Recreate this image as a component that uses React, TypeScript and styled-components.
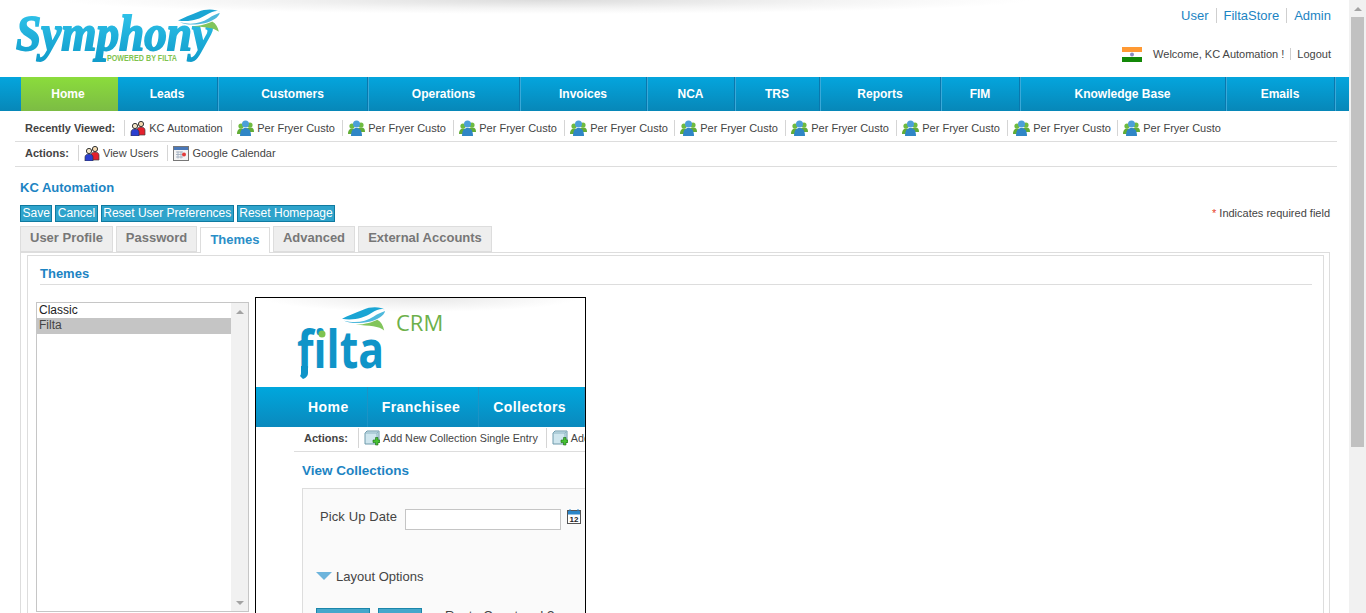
import React from "react";
import styled, { createGlobalStyle } from "styled-components";

const Global = createGlobalStyle`
  html, body { margin: 0; padding: 0; height: 613px; overflow: hidden; background: #fff; }
  body { font-family: "Liberation Sans", Arial, sans-serif; }
  * { box-sizing: border-box; }
`;

const Page = styled.div`
  display: flex;
  width: 1366px;
  height: 613px;
  overflow: hidden;
`;
const Main = styled.main`
  width: 1349px;
  flex: none;
  height: 613px;
  overflow: hidden;
`;
const ScrollRail = styled.aside`
  width: 17px;
  flex: none;
  background: #f1f1f1;
  display: flex;
  flex-direction: column;
  align-items: center;
`;
const ScrollUp = styled.div`
  height: 17px;
  width: 100%;
  display: flex;
  align-items: center;
  justify-content: center;
  &::before {
    content: "";
    border-left: 4px solid transparent;
    border-right: 4px solid transparent;
    border-bottom: 4px solid #a3a3a3;
  }
`;
const ScrollThumb = styled.div`
  width: 13px;
  height: 430px;
  background: #c1c1c1;
`;

const Header = styled.header`
  position: relative;
  height: 77px;
  display: flex;
  justify-content: space-between;
  padding: 10px 18px 0 15px;
  &::before {
    content: "";
    position: absolute;
    top: 0;
    left: 60px;
    width: 970px;
    height: 14px;
    background: radial-gradient(ellipse 50% 100% at 50% 0, #dcdcdc 0%, #f4f4f4 60%, #ffffff 100%);
  }
`;
const LogoBox = styled.div`
  position: relative;
  width: 206px;
  height: 56px;
`;
const HeaderRight = styled.div`
  position: relative;
  display: flex;
  flex-direction: column;
  align-items: flex-end;
`;
const TopLinks = styled.div`
  display: flex;
  height: 15px;
  align-items: center;
  font-size: 13px;
  margin: -2px 0 23px;
`;
const TopLink = styled.a`
  color: #1c84c3;
  padding: 0 7px;
  line-height: 15px;
  border-left: 1px solid #cfcfcf;
  &:first-child { border-left: 0; }
  &:last-child { padding-right: 0; }
`;
const WelcomeRow = styled.div`
  display: flex;
  align-items: center;
  font-size: 11px;
  color: #444;
  height: 16px;
`;
const FlagBox = styled.svg`
  margin-right: 11px;
  display: block;
`;
const Divider = styled.span`
  width: 1px;
  height: 12px;
  background: #cfcfcf;
  margin: 0 6px;
`;

const Nav = styled.nav`
  height: 34px;
  padding-left: 21px;
  display: flex;
  background: linear-gradient(#04a5dd, #0787b8);
`;
const NavItem = styled.a<{ $w: number; $active?: boolean }>`
  width: ${(p) => p.$w}px;
  flex: none;
  display: flex;
  align-items: center;
  justify-content: center;
  padding-right: ${(p) => (p.$active ? 3 : 2)}px;
  color: #fff;
  font-size: 12px;
  font-weight: 700;
  background: ${(p) => (p.$active ? "linear-gradient(#8bdc3c, #7cbc44)" : "transparent")};
  border-right: ${(p) => (p.$active ? "0" : "1px solid #3aa9d8")};
  box-shadow: ${(p) => (p.$active ? "none" : "inset -1px 0 0 #0a78ad")};
`;

const Crumbs = styled.div`
  padding: 0 12px 0 15px;
`;
const CrumbRow = styled.div<{ $h: number; $shift: number }>`
  height: ${(p) => p.$h}px;
  padding: ${(p) => (p.$shift > 0 ? p.$shift : 0)}px 0 ${(p) => (p.$shift < 0 ? -p.$shift : 0)}px 10px;
  display: flex;
  align-items: center;
  border-bottom: 1px solid #ddd;
  font-size: 11px;
  color: #444;
`;
const CrumbLabel = styled.b`
  font-weight: 700;
  font-size: 11px;
  margin-right: 9px;
`;
const CrumbItem = styled.span<{ $w?: number }>`
  display: flex;
  align-items: center;
  height: 16px;
  padding-left: 5px;
  border-left: 1px solid #d5d5d5;
  ${(p) => (p.$w ? `width: ${p.$w}px;` : "margin-right: 9px;")}
  flex: none;
  gap: 3px;
  white-space: nowrap;
`;

const Content = styled.div`
  padding: 0 19px 0 20px;
`;
const PageTitle = styled.h1`
  margin: 13px 0 10px;
  font-size: 13px;
  line-height: 15px;
  font-weight: 700;
  color: #1c84c3;
`;
const ActionBar = styled.div`
  display: flex;
  justify-content: space-between;
  align-items: center;
  height: 17px;
`;
const ActionGroup = styled.div`
  display: flex;
  gap: 3px;
`;
const ActionBtn = styled.button`
  font-family: inherit;
  font-size: 12px;
  height: 17px;
  line-height: 15px;
  padding: 0 1.5px;
  border: 1px solid #0f7aa0;
  background: #2ea3cb;
  color: #fff;
  white-space: nowrap;
`;
const Required = styled.div`
  font-size: 11px;
  color: #444;
  margin-bottom: 1px;
  span { color: #e8402a; }
`;
const Tabs = styled.div`
  display: flex;
  gap: 3px;
  margin-top: 4px;
  height: 26px;
`;
const Tab = styled.a<{ $w: number; $active?: boolean }>`
  position: relative;
  z-index: 1;
  width: ${(p) => p.$w}px;
  height: 26px;
  margin-top: ${(p) => (p.$active ? 1 : 0)}px;
  padding-bottom: ${(p) => (p.$active ? 2 : 4)}px;
  display: flex;
  align-items: center;
  justify-content: center;
  font-size: 13px;
  font-weight: 700;
  color: ${(p) => (p.$active ? "#2a8ec7" : "#777")};
  background: ${(p) => (p.$active ? "#fff" : "#eee")};
  border: 1px solid #ddd;
  border-bottom: ${(p) => (p.$active ? "0" : "1px solid #ddd")};
`;
const Outer = styled.div`
  border: 1px solid #ddd;
  padding: 2px 5px 0 6px;
  height: 400px;
`;
const Inner = styled.div`
  border: 1px solid #ddd;
  padding: 0 11px 0 8px;
  height: 400px;
`;
const SectionTitle = styled.h2`
  margin: 0 0 12px 4px;
  padding: 10px 0 2px;
  font-size: 13px;
  line-height: 16px;
  font-weight: 700;
  color: #1c84c3;
  border-bottom: 1px solid #ddd;
`;
const ThemeRow = styled.div`
  display: flex;
  align-items: flex-start;
  gap: 6px;
`;
const ThemeList = styled.div`
  width: 213px;
  height: 310px;
  margin-top: 5px;
  border: 1px solid #c6c6c6;
  display: flex;
`;
const ListOptions = styled.div`
  flex: 1;
  font-size: 12px;
  color: #222;
`;
const ListOption = styled.div<{ $sel?: boolean }>`
  height: ${(p) => (p.$sel ? 16 : 15)}px;
  line-height: 15px;
  padding-left: 2px;
  background: ${(p) => (p.$sel ? "#c5c5c5" : "transparent")};
  color: ${(p) => (p.$sel ? "#444" : "#222")};
`;
const ListScroll = styled.div`
  width: 17px;
  background: #f1f1f1;
  display: flex;
  flex-direction: column;
  justify-content: space-between;
  align-items: center;
  padding: 7px 0 6px;
`;
const Arrow = styled.i<{ $down?: boolean }>`
  border-left: 4px solid transparent;
  border-right: 4px solid transparent;
  ${(p) => (p.$down ? "border-top: 4px solid #a3a3a3;" : "border-bottom: 4px solid #a3a3a3;")}
`;

const Preview = styled.div`
  width: 331px;
  height: 340px;
  flex: none;
  border: 1px solid #000;
  background: #fff;
  overflow: hidden;
`;
const PvHeader = styled.div`
  position: relative;
  height: 89px;
  background: radial-gradient(ellipse 48% 14px at 50% 0, #e8e8e8 0%, #ffffff 100%);
  padding: 10px 0 0 41px;
  display: flex;
`;
const PvCrm = styled.div`
  font-family: "Open Sans", sans-serif;
  font-size: 22px;
  line-height: 30px;
  color: #6cb04a;
  margin: -1px 0 0;
`;
const PvNav = styled.div`
  height: 40px;
  display: flex;
  padding-left: 38px;
  background: linear-gradient(#00a7dd, #0a89bd);
`;
const PvNavItem = styled.span`
  display: flex;
  align-items: center;
  padding: 0 18px 0 14px;
  color: #fff;
  font-size: 14px;
  font-weight: 700;
  letter-spacing: 0.45px;
  border-right: 1px solid #1d93c5;
  white-space: nowrap;
`;
const PvBody = styled.div`
  padding-left: 38px;
  width: 440px;
`;
const PvActions = styled.div`
  height: 25px;
  display: flex;
  align-items: center;
  padding: 0 0 2px 10px;
  border-bottom: 1px solid #ddd;
  font-size: 10.75px;
  color: #444;
`;
const PvActionLabel = styled(CrumbLabel)`
  margin-right: 10px;
`;
const PvItem = styled.span`
  display: flex;
  align-items: center;
  height: 20px;
  gap: 3px;
  padding-left: 5px;
  margin-right: 8px;
  border-left: 1px solid #d5d5d5;
  white-space: nowrap;
`;
const PvTitle = styled.h3`
  margin: 10px 0 9px 8px;
  font-size: 13.5px;
  line-height: 17px;
  font-weight: 700;
  color: #1c84c3;
`;
const PvBox = styled.div`
  margin-left: 8px;
  background: #fafafa;
  border: 1px solid #ddd;
  border-right: 0;
  height: 200px;
  width: 400px;
  padding: 19px 0 0 17px;
  font-size: 13px;
  color: #444;
`;
const PvField = styled.div`
  display: flex;
  align-items: center;
  height: 22px;
`;
const PvLabel = styled.span`
  margin-bottom: 6px;
  letter-spacing: 0.1px;
`;
const PvInput = styled.div`
  width: 156px;
  height: 21px;
  margin: 0 6px 0 8px;
  background: #fff;
  border: 1px solid #c5c5c5;
`;
const PvIconWrap = styled.span`
  display: flex;
  margin-bottom: 6px;
`;
const PvToggle = styled.div`
  display: flex;
  align-items: center;
  gap: 4px;
  margin: 37px 0 0 -4px;
  height: 18px;
`;
const PvTriangle = styled.i`
  border-left: 8px solid transparent;
  border-right: 8px solid transparent;
  border-top: 8px solid #6db4dc;
`;
const PvButtons = styled.div`
  display: flex;
  align-items: flex-start;
  margin: 23px 0 0 -4px;
`;
const PvBtn = styled.div<{ $w: number }>`
  width: ${(p) => p.$w}px;
  height: 24px;
  margin-right: 8px;
  background: #45a7cb;
  border: 1px solid #1b86aa;
`;
const PvNote = styled.span`
  margin: 0 0 0 15px;
  line-height: 15px;
`;
const FiltaWord = styled.text`
  font-variant-ligatures: none;
`;

const UsersIcon = () => (
  <svg width="16" height="16" viewBox="0 0 16 16">
    <circle cx="11" cy="4" r="2.6" fill="#f3d9b0" stroke="#333" strokeWidth="1" />
    <path d="M7 15V10c0-2 2-3 4-3s4 1 4 3v5z" fill="#e4202c" stroke="#444" strokeWidth=".7" />
    <circle cx="5" cy="6" r="2.6" fill="#f3e6c8" stroke="#333" strokeWidth="1" />
    <path d="M1 16v-4c0-2 2-3 4-3s4 1 4 3v4z" fill="#2a3fd0" stroke="#334" strokeWidth=".7" />
  </svg>
);
const PeopleIcon = () => (
  <svg width="17" height="16" viewBox="0 0 17 16">
    <circle cx="4" cy="6" r="2.6" fill="#6fbb3f" />
    <path d="M0 14c0-4 2-5.500 4-5.500s4 1.500 4 5.500z" fill="#62ad36" />
    <circle cx="13" cy="5" r="2.600" fill="#6fbb3f" />
    <path d="M9 12c0-4 2-4.500 4-4.500s4 .5 4 4.500z" fill="#62ad36" />
    <circle cx="8.500" cy="4" r="3.500" fill="#4c9fd8" />
    <path d="M3 16c0-6 2.500-8 5.500-8s5.500 2 5.500 8z" fill="#2f86c6" />
  </svg>
);
const CalendarIcon = () => (
  <svg width="16" height="15" viewBox="0 0 16 15">
    <rect x=".5" y=".5" width="15" height="14" fill="#f4f4f4" stroke="#777" />
    <rect x="1" y="1" width="14" height="3" fill="#4a78b8" />
    <path d="M3 6h7M3 8.500h7M3 11h7M5 5.500v7M8 5.500v7" stroke="#a8b4c4" />
    <circle cx="11" cy="8.500" r="2" fill="#e33c3c" />
  </svg>
);
const AddIcon = () => (
  <svg width="16" height="16" viewBox="0 0 16 16">
    <path d="M1 3l2-2h12v11l-2 2H1z" fill="#cfe6ee" stroke="#6e9aab" />
    <path d="M1 3h12v11M13 3l2-2" fill="none" stroke="#8db4c2" />
    <path d="M9 10h2.500V7.500H14V10h2v2.500h-2V15h-2.500v-2.500H9z" fill="#46c233" stroke="#1c6a14" strokeWidth=".6" />
  </svg>
);
const DateIcon = () => (
  <svg width="14" height="15" viewBox="0 0 14 15">
    <rect x=".5" y="1.500" width="13" height="13" fill="#fff" stroke="#555" />
    <rect x="1" y="2" width="12" height="3.500" fill="#2c86c8" />
    <path d="M3 0v3M11 0v3" stroke="#2c86c8" />
    <text x="7" y="13" textAnchor="middle" fontSize="8" fontWeight="700" fontFamily="Liberation Sans" fill="#222">12</text>
  </svg>
);

const Leaf = ({ x, y, s }: { x: number; y: number; s: number }) => (
  <g transform={`translate(${x} ${y}) scale(${s})`}>
    <path d="M0 11C12 13 22 10 30 5 36 1 42 0 44 2 40-1 30-2 21 2 13 5 6 8 0 11Z" fill="#1aa5d4" />
    <path d="M2 13C14 16 24 14 32 9 36 6 41 4 44 3 43 8 36 12 28 14 18 16 8 16 2 13Z" fill="#4fb9dc" />
    <path d="M14 17C24 17 32 14 36 12 40 14 42 18 43 23 38 18 28 18 14 17Z" fill="#82c55b" />
  </g>
);

const SymphonyLogo = () => (
  <LogoBox>
    <svg width="206" height="56" viewBox="0 0 206 56" style={{ display: "block", overflow: "visible" }}>
      <defs>
        <linearGradient id="sg" x1="0" y1="0" x2="0" y2="1">
          <stop offset="0" stopColor="#34c8ee" />
          <stop offset="1" stopColor="#109ccb" />
        </linearGradient>
      </defs>
      <text x="1" y="40" fontFamily="Liberation Serif" fontStyle="italic" fontWeight="700" fontSize="51" fill="url(#sg)" textLength="196" lengthAdjust="spacingAndGlyphs" stroke="url(#sg)" strokeWidth="1.8">Symphony</text>
      <text x="92" y="51" fontFamily="Liberation Sans" fontWeight="700" fontSize="8.5" fill="#7fc34f" textLength="70" lengthAdjust="spacingAndGlyphs">POWERED BY FILTA</text>
      <Leaf x={163} y={0} s={0.95} />
    </svg>
  </LogoBox>
);

const FiltaLogo = () => (
  <svg width="99" height="72" viewBox="0 0 99 72" style={{ display: "block", overflow: "visible" }}>
    <Leaf x={45} y={0} s={0.98} />
    <FiltaWord x="0" y="60" fontFamily="Open Sans" fontWeight="700" fontSize="52" fill="#0f94c8" textLength="87" lengthAdjust="spacingAndGlyphs">filta</FiltaWord>
    <path d="M4 58h7v7q0 4-5 6l-3-3q1-1 1-3z" fill="#0f94c8" />
    <circle cx="25" cy="26" r="3.500" fill="#7fc34f" />
  </svg>
);

const navItems: [string, number][] = [
  ["Home", 97], ["Leads", 101], ["Customers", 150], ["Operations", 152], ["Invoices", 127],
  ["NCA", 88], ["TRS", 85], ["Reports", 121], ["FIM", 79], ["Knowledge Base", 206], ["Emails", 109],
];
const recentWidths = [111, 111, 111, 110, 111, 111, 111, 110, 110];

export default function App() {
  return (
    <Page>
      <Global />
      <Main>
        <Header>
          <SymphonyLogo />
          <HeaderRight>
            <TopLinks>
              <TopLink>User</TopLink>
              <TopLink>FiltaStore</TopLink>
              <TopLink>Admin</TopLink>
            </TopLinks>
            <WelcomeRow>
              <FlagBox width="20" height="15" viewBox="0 0 20 15">
                <rect width="20" height="5" fill="#ff9933" />
                <rect y="5" width="20" height="5" fill="#fff" />
                <rect y="10" width="20" height="5" fill="#138808" />
                <circle cx="10" cy="7.500" r="2" fill="#8a8ac0" />
              </FlagBox>
              <span>Welcome, KC Automation !</span>
              <Divider />
              <span>Logout</span>
            </WelcomeRow>
          </HeaderRight>
        </Header>
        <Nav>
          {navItems.map(([label, w], i) => (
            <NavItem key={label} $w={w} $active={i === 0}>{label}</NavItem>
          ))}
        </Nav>
        <Crumbs>
          <CrumbRow $h={31} $shift={4}>
            <CrumbLabel>Recently Viewed:</CrumbLabel>
            <CrumbItem $w={107}><UsersIcon /><span>KC Automation</span></CrumbItem>
            {recentWidths.map((w, i) => (
              <CrumbItem key={i} $w={w}><PeopleIcon /><span>Per Fryer Custo</span></CrumbItem>
            ))}
          </CrumbRow>
          <CrumbRow $h={25} $shift={-2}>
            <CrumbLabel>Actions:</CrumbLabel>
            <CrumbItem><UsersIcon /><span>View Users</span></CrumbItem>
            <CrumbItem><CalendarIcon /><span>Google Calendar</span></CrumbItem>
          </CrumbRow>
        </Crumbs>
        <Content>
          <PageTitle>KC Automation</PageTitle>
          <ActionBar>
            <ActionGroup>
              <ActionBtn>Save</ActionBtn>
              <ActionBtn>Cancel</ActionBtn>
              <ActionBtn>Reset User Preferences</ActionBtn>
              <ActionBtn>Reset Homepage</ActionBtn>
            </ActionGroup>
            <Required><span>*</span> Indicates required field</Required>
          </ActionBar>
          <Tabs>
            <Tab $w={93}>User Profile</Tab>
            <Tab $w={81}>Password</Tab>
            <Tab $w={70} $active>Themes</Tab>
            <Tab $w={82}>Advanced</Tab>
            <Tab $w={134}>External Accounts</Tab>
          </Tabs>
          <Outer>
            <Inner>
              <SectionTitle>Themes</SectionTitle>
              <ThemeRow>
                <ThemeList>
                  <ListOptions>
                    <ListOption>Classic</ListOption>
                    <ListOption $sel>Filta</ListOption>
                  </ListOptions>
                  <ListScroll>
                    <Arrow />
                    <Arrow $down />
                  </ListScroll>
                </ThemeList>
                <Preview>
                  <PvHeader>
                    <FiltaLogo />
                    <PvCrm>CRM</PvCrm>
                  </PvHeader>
                  <PvNav>
                    <PvNavItem>Home</PvNavItem>
                    <PvNavItem>Franchisee</PvNavItem>
                    <PvNavItem>Collectors</PvNavItem>
                  </PvNav>
                  <PvBody>
                    <PvActions>
                      <PvActionLabel>Actions:</PvActionLabel>
                      <PvItem><AddIcon /><span>Add New Collection Single Entry</span></PvItem>
                      <PvItem><AddIcon /><span>Add</span></PvItem>
                    </PvActions>
                    <PvTitle>View Collections</PvTitle>
                    <PvBox>
                      <PvField>
                        <PvLabel>Pick Up Date</PvLabel>
                        <PvInput />
                        <PvIconWrap><DateIcon /></PvIconWrap>
                      </PvField>
                      <PvToggle>
                        <PvTriangle />
                        <span>Layout Options</span>
                      </PvToggle>
                      <PvButtons>
                        <PvBtn $w={54} />
                        <PvBtn $w={44} />
                        <PvNote>Route Count and ?</PvNote>
                      </PvButtons>
                    </PvBox>
                  </PvBody>
                </Preview>
              </ThemeRow>
            </Inner>
          </Outer>
        </Content>
      </Main>
      <ScrollRail>
        <ScrollUp />
        <ScrollThumb />
      </ScrollRail>
    </Page>
  );
}
